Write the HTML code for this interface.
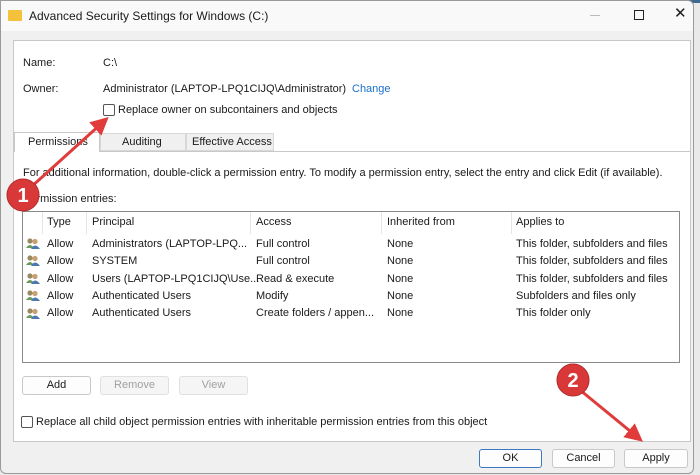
<!DOCTYPE html>
<html><head><style>
*{margin:0;padding:0;box-sizing:border-box}
body{width:700px;height:475px;overflow:hidden;background:#e9e9e9;font-family:"Liberation Sans",sans-serif;font-size:11px;color:#1a1a1a;position:relative}
.win{position:absolute;left:0;top:0;width:694px;height:474px;background:#f0f0f0;border:1px solid #9a9a9a;border-radius:0 6px 6px 6px}
.title{position:absolute;left:0;top:0;width:100%;height:30px;background:#f9f9f9;border-radius:0 6px 0 0}
.a{position:absolute;white-space:nowrap}
.panel{position:absolute;left:12px;top:39px;width:678px;height:402px;background:#fff;border:1px solid #c8c8c8}
.btn{position:absolute;height:19px;border:1px solid #c8c8c8;border-radius:3px;background:#fdfdfd;text-align:center;line-height:17px}
.dis{color:#a0a0a0;background:#f5f5f5;border-color:#e0e0e0}
.cb{position:absolute;width:12px;height:12px;border:1px solid #555;border-radius:2px;background:#fff}
.list{position:absolute;left:21px;top:210px;width:658px;height:152px;border:1px solid #8a8a8a;background:#fff}
</style></head><body>
<div class="a" style="left:430px;top:0;width:270px;height:3px;background:#3d6a8e"></div>
<div class="win">
<div class="title">
<div class="a" style="left:7px;top:9px;width:14px;height:11px;background:#f3c13a;border-radius:1px"></div>
<div class="a" style="left:28px;top:8px;font-size:12px">Advanced Security Settings for Windows (C:)</div>
<div class="a" style="left:589px;top:14px;width:10px;height:1px;background:#bbb"></div>
<div class="a" style="left:633px;top:9px;width:10px;height:10px;border:1px solid #222"></div>
<div class="a" style="left:673px;top:3px;font-size:15px">✕</div>
</div>
<div class="panel"></div>
<div class="a" style="left:22px;top:56px">Name:</div>
<div class="a" style="left:102px;top:56px">C:\</div>
<div class="a" style="left:22px;top:82px">Owner:</div>
<div class="a" style="left:102px;top:82px">Administrator (LAPTOP-LPQ1CIJQ\Administrator)</div>
<div class="a" style="left:351px;top:82px;color:#1a6fc9">Change</div>
<div class="cb" style="left:102px;top:103px"></div>
<div class="a" style="left:117px;top:103px">Replace owner on subcontainers and objects</div>
<div class="a" style="left:13px;top:131px;width:86px;height:20px;background:#fff;border:1px solid #c8c8c8;border-bottom:none"></div>
<div class="a" style="left:27px;top:135px">Permissions</div>
<div class="a" style="left:99px;top:132px;width:86px;height:18px;background:#f0f0f0;border:1px solid #d8d8d8"></div>
<div class="a" style="left:121px;top:135px">Auditing</div>
<div class="a" style="left:185px;top:132px;width:88px;height:18px;background:#f0f0f0;border:1px solid #d8d8d8"></div>
<div class="a" style="left:191px;top:135px">Effective Access</div>
<div class="a" style="left:99px;top:150px;width:591px;height:1px;background:#c8c8c8"></div>
<div class="a" style="left:22px;top:166px">For additional information, double-click a permission entry. To modify a permission entry, select the entry and click Edit (if available).</div>
<div class="a" style="left:22px;top:192px">Permission entries:</div>
<div class="list">
<div class="a" style="left:19px;top:0;width:1px;height:22px;background:#e5e5e5"></div>
<div class="a" style="left:63px;top:0;width:1px;height:22px;background:#e5e5e5"></div>
<div class="a" style="left:227px;top:0;width:1px;height:22px;background:#e5e5e5"></div>
<div class="a" style="left:358px;top:0;width:1px;height:22px;background:#e5e5e5"></div>
<div class="a" style="left:488px;top:0;width:1px;height:22px;background:#e5e5e5"></div>
</div>
<div class="a" style="left:46px;top:215px">Type</div>
<div class="a" style="left:91px;top:215px">Principal</div>
<div class="a" style="left:255px;top:215px">Access</div>
<div class="a" style="left:386px;top:215px">Inherited from</div>
<div class="a" style="left:515px;top:215px">Applies to</div>
<div style="position:absolute;left:0;top:235px">
<div class="a" style="top:0;left:46px;line-height:17.3px">Allow<br>Allow<br>Allow<br>Allow<br>Allow</div>
<div class="a" style="top:0;left:91px;line-height:17.3px">Administrators (LAPTOP-LPQ...<br>SYSTEM<br>Users (LAPTOP-LPQ1CIJQ\Use...<br>Authenticated Users<br>Authenticated Users</div>
<div class="a" style="top:0;left:255px;line-height:17.3px">Full control<br>Full control<br>Read &amp; execute<br>Modify<br>Create folders / appen...</div>
<div class="a" style="top:0;left:386px;line-height:17.3px">None<br>None<br>None<br>None<br>None</div>
<div class="a" style="top:0;left:515px;line-height:17.3px">This folder, subfolders and files<br>This folder, subfolders and files<br>This folder, subfolders and files<br>Subfolders and files only<br>This folder only</div>
</div>
<svg class="a" style="left:24px;top:235px" width="16" height="90">
<g id="u"><circle cx="5" cy="5" r="2.6" fill="#9a8a60"/><path d="M1 12 q4-6 8 0z" fill="#6a9a5a"/><circle cx="10" cy="5.5" r="2.6" fill="#c8a070"/><path d="M6 13 q4-7 9 0z" fill="#4a78b0"/></g>
<use href="#u" y="17"/><use href="#u" y="35"/><use href="#u" y="52"/><use href="#u" y="70"/>
</svg>
<div class="btn" style="left:21px;top:375px;width:69px">Add</div>
<div class="btn dis" style="left:99px;top:375px;width:69px">Remove</div>
<div class="btn dis" style="left:178px;top:375px;width:69px">View</div>
<div class="cb" style="left:20px;top:415px"></div>
<div class="a" style="left:35px;top:415px">Replace all child object permission entries with inheritable permission entries from this object</div>
<div class="btn" style="left:478px;top:448px;width:63px;border-color:#3a78c0">OK</div>
<div class="btn" style="left:551px;top:448px;width:63px">Cancel</div>
<div class="btn" style="left:623px;top:448px;width:64px">Apply</div>
</div>
<svg style="position:absolute;left:0;top:0" width="700" height="475">
<defs><marker id="m" markerWidth="6" markerHeight="6" refX="3" refY="3" orient="auto"><path d="M0 0L6 3L0 6z" fill="#e03c3c"/></marker></defs>
<line x1="30" y1="188" x2="102" y2="123" stroke="#e03c3c" stroke-width="3" marker-end="url(#m)"/>
<circle cx="23" cy="195" r="16" fill="#d93838" stroke="#b02a2a"/>
<text x="23" y="202" fill="#fff" font-family="Liberation Sans" font-weight="bold" font-size="20" text-anchor="middle">1</text>
<line x1="580" y1="390" x2="636" y2="436" stroke="#e03c3c" stroke-width="3" marker-end="url(#m)"/>
<circle cx="573" cy="380" r="16" fill="#d93838" stroke="#b02a2a"/>
<text x="573" y="387" fill="#fff" font-family="Liberation Sans" font-weight="bold" font-size="20" text-anchor="middle">2</text>
</svg>
</body></html>
